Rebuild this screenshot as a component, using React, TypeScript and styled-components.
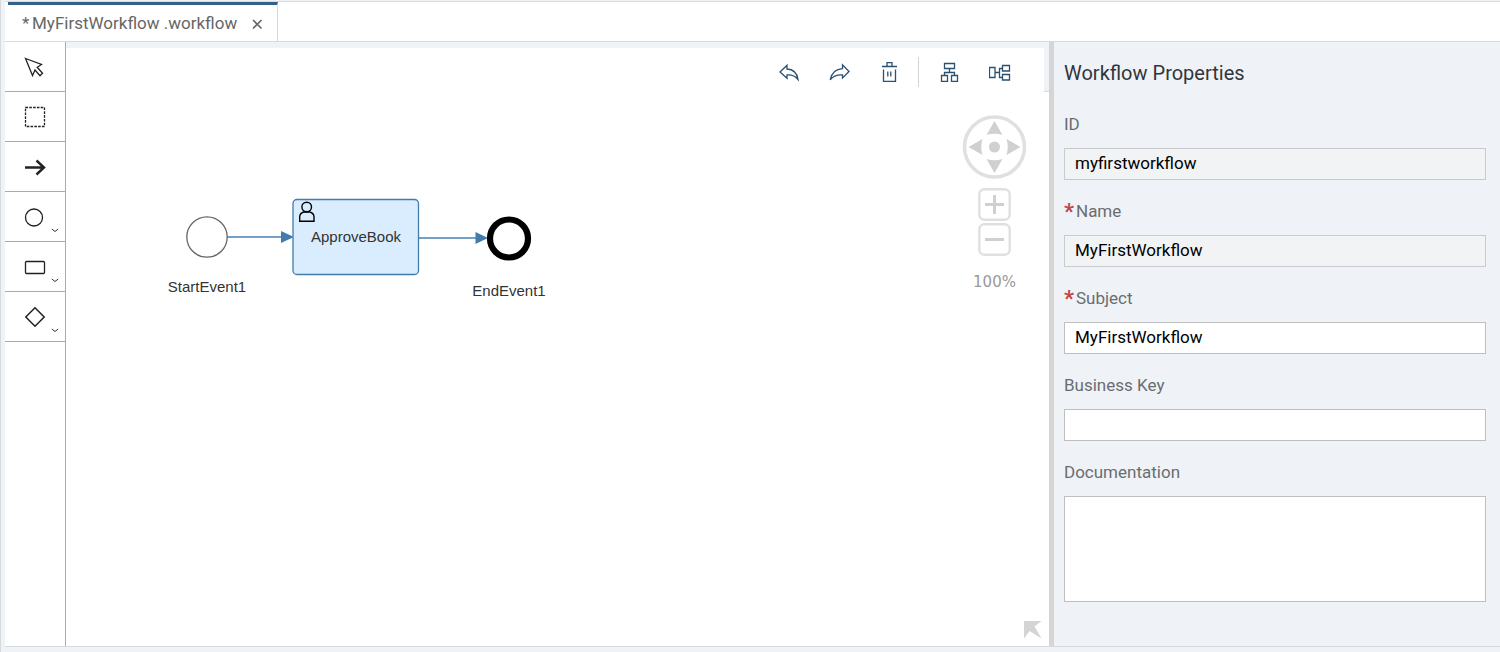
import React from 'react';
import styled, { createGlobalStyle } from 'styled-components';

const uiFont = 'Roboto, "Liberation Sans", sans-serif';
const pale = '#eff3f8';
const ink = '#32363a';
const toolInk = '#2b5070';

const GlobalStyle = createGlobalStyle`
  * { box-sizing: border-box; }
  body { margin: 0; font-family: ${uiFont}; background: ${pale}; }
  button, input, textarea { font-family: inherit; }
`;

const Page = styled.div`
  display: flex;
  flex-direction: column;
  min-height: 100vh;
  padding: 1px 0 5px 4px;
  border-left: 1px solid #d5dade;
  background: ${pale};
`;

const TabBar = styled.div`
  display: flex;
  height: 41px;
  padding-left: 3px;
  background: #fff;
  border-top: 1px solid #d9dde0;
  border-bottom: 1px solid #d5dadd;
`;

const Tab = styled.div`
  display: flex;
  align-items: center;
  width: 270px;
  padding: 0 11px 0 14px;
  border-top: 3px solid #346187;
  border-right: 1px solid #d9d9d9;
`;

const TabTitle = styled.button`
  flex: 1;
  padding: 0;
  border: 0;
  background: none;
  color: #666;
  font-size: 17px;
  line-height: 24px;
  text-align: left;
  white-space: nowrap;
`;

const DirtyMark = styled.span`
  display: inline-block;
  width: 10px;
`;

const CloseButton = styled.button`
  display: flex;
  padding: 4px 3px 2px;
  border: 0;
  background: none;
`;

const Editor = styled.main`
  display: flex;
  flex: 1;
  border-bottom: 1px solid #d5dadd;
`;

const Palette = styled.nav`
  display: flex;
  flex-direction: column;
  flex: none;
  width: 61px;
  background: #fff;
  border-right: 1px solid #aaa;
`;

const PaletteButton = styled.button`
  position: relative;
  display: flex;
  align-items: center;
  justify-content: center;
  height: 50px;
  padding: 0;
  border: 0;
  border-bottom: 1px solid #aaa;
  background: #fff;
`;

const MoreMark = styled.svg`
  position: absolute;
  right: 6px;
  bottom: 8px;
`;

const Workspace = styled.section`
  display: flex;
  flex-direction: column;
  flex: 1;
  min-width: 0;
  background: #fff;
`;

const ToolbarFrame = styled.div`
  padding: 6px 5px 0 0;
  background: ${pale};
  border-bottom: 1px solid #cfdbe5;
`;

const Toolbar = styled.div`
  display: flex;
  align-items: center;
  justify-content: flex-end;
  height: 44px;
  margin-bottom: -1px;
  padding: 4px 19px 0 0;
  background: #fff;
`;

const ToolButton = styled.button`
  display: flex;
  align-items: center;
  justify-content: center;
  width: 50px;
  height: 40px;
  padding: 0;
  border: 0;
  background: none;
`;

const Separator = styled.span`
  width: 1px;
  height: 30px;
  margin: 0 6px 0 3px;
  background: #d0d4d8;
`;

const Stage = styled.div`
  position: relative;
  flex: 1;
`;

const Diagram = styled.svg`
  position: absolute;
  inset: 0;
  width: 100%;
  height: 100%;
  font-family: "Liberation Sans", Arial, sans-serif;
  font-size: 15px;
`;

const Navigator = styled.div`
  position: absolute;
  top: 23px;
  right: 22px;
  display: flex;
  flex-direction: column;
  align-items: center;
  width: 65px;
`;

const NavButton = styled.button<{ $gap: number }>`
  display: flex;
  margin: 0 0 ${p => p.$gap}px;
  padding: 0;
  border: 0;
  background: none;
`;

const ZoomLevel = styled.output`
  color: #999;
  font-family: "DejaVu Sans", sans-serif;
  font-size: 15px;
  line-height: 20px;
`;

const OverviewButton = styled.button`
  position: absolute;
  right: 7px;
  bottom: 7px;
  display: flex;
  padding: 0;
  border: 0;
  background: none;
`;

const Splitter = styled.div`
  flex: none;
  width: 5px;
  background: #d5d5d5;
`;

const Properties = styled.form`
  flex: none;
  width: 446px;
  padding: 19px 14px 44px 10px;
  background: ${pale};
`;

const PanelTitle = styled.h2`
  margin: 0 0 8px;
  color: ${ink};
  font-size: 20px;
  font-weight: 400;
  line-height: 24px;
`;

const Field = styled.div`
  display: flex;
  flex-direction: column;
  padding-top: 19px;
`;

const Label = styled.label`
  display: flex;
  margin-bottom: 12px;
  color: #6a6d70;
  font-size: 17px;
  line-height: 24px;
`;

const Required = styled.span`
  width: 12px;
  padding-top: 2px;
  color: #c14646;
  font-size: 22px;
  font-weight: 700;
  line-height: 22px;
`;

const TextInput = styled.input`
  width: 100%;
  height: 32px;
  padding: 0 10px 2px;
  border: 1px solid #bfbfbf;
  border-radius: 0;
  background: #fff;
  color: #000;
  font-size: 17px;
  outline: none;

  &:read-only {
    background: #f2f3f4;
    border-color: #c8cacc;
  }
`;

const TextBox = styled.textarea`
  width: 100%;
  height: 106px;
  padding: 6px 10px;
  border: 1px solid #bfbfbf;
  border-radius: 0;
  background: #fff;
  font-size: 17px;
  resize: none;
  outline: none;
`;

type PaletteItem = { name: string; more?: boolean; shape: React.ReactNode };

const paletteItems: PaletteItem[] = [
  { name: 'Select', shape: <path d="M2.5 3.5 18.5 9.5 14.2 12.3 19.5 18.3 17 20.7 12 15 9.5 20.5Z" /> },
  { name: 'Lasso', shape: <rect x="2.5" y="2.5" width="19" height="19" strokeDasharray="2.6 1.2" /> },
  { name: 'Sequence flow', shape: <path d="M2 12.5H21M13.5 5.5 21 12.5 13.5 19.5" strokeWidth="2.4" /> },
  { name: 'Events', more: true, shape: <circle cx="11" cy="12.5" r="8.5" /> },
  { name: 'Tasks', more: true, shape: <rect x="2.5" y="6.5" width="19" height="12" rx="1" /> },
  { name: 'Gateways', more: true, shape: <path d="M12 2.8 21.2 12 12 21.2 2.8 12Z" strokeWidth="1.5" /> },
];

const undoShape = <path d="M1 10 8 3.2V7C14 7.2 18 11 19 17.5 16 13.8 12 12.6 8 13V16.2Z" />;
const redoShape = <path d="M20 9.5 13.5 2.8V6.6C7 7 2.5 11 1.2 17.8 4.5 13.8 9 12.6 13.5 13V16Z" />;
const deleteShape = <path d="M3 4.5H18M8 4.5V.5H13V4.5M4.5 7.5V19.5H16.5V7.5M8.8 9.5V14.5M11.8 9.5V14.5" />;
const verticalShape = (
  <path d="M5.5 1.5H15.5V6.5H5.5ZM10.5 6.5V10.5M5.5 13.5V10.5H15.5V13.5M2.5 13.5H8.5V19.5H2.5ZM12.5 13.5H18.5V19.5H12.5Z" />
);
const horizontalShape = (
  <path d="M.5 5.5H6V15.5H.5ZM6 10.5H10.5M13.5 6.5H10.5V15.5H13.5M13.5 3.5H20.5V9H13.5ZM13.5 12.5H20.5V18H13.5Z" />
);

function Tool({ name, children }: { name: string; children: React.ReactNode }) {
  return (
    <ToolButton type="button" aria-label={name}>
      <svg width="22" height="20" viewBox="0 0 22 20" fill="none" stroke={toolInk} strokeWidth="1.3">
        {children}
      </svg>
    </ToolButton>
  );
}

function ZoomButton({ name, sign, gap }: { name: string; sign: string; gap: number }) {
  return (
    <NavButton type="button" aria-label={name} $gap={gap}>
      <svg width="33" height="33" viewBox="0 0 33 33" fill="none">
        <rect x="1.3" y="1.3" width="30.4" height="30.4" rx="5" stroke="#e0e0e0" strokeWidth="2.4" />
        <path d={sign} stroke="#d0d0d0" strokeWidth="3" />
      </svg>
    </NavButton>
  );
}

function FlowDiagram() {
  return (
    <Diagram>
      <g stroke="#73a0c8" strokeWidth="2">
        <path d="M161 145H218" />
        <path d="M353 146H412" />
      </g>
      <g fill="#427cac">
        <path d="M215 139 228 145 215 151Z" />
        <path d="M409.5 140 422 146 409.5 152Z" />
      </g>
      <circle cx="141" cy="145" r="20.2" fill="#fff" stroke="#666" strokeWidth="1.3" />
      <rect x="227" y="107.5" width="125.5" height="75" rx="4" fill="#d9edff" stroke="#427cac" strokeWidth="1.3" />
      <g fill="none" stroke="#000" strokeWidth="1.4">
        <circle cx="240.7" cy="115" r="4.8" />
        <path d="M233.7 129.300V124.500Q234 121 238 120H243.500Q247.700 121 248 124.500V129.300Z" />
      </g>
      <circle cx="443" cy="146.5" r="19" fill="#fff" stroke="#000" strokeWidth="6.2" />
      <g fill="#333" textAnchor="middle">
        <text x="141" y="200">StartEvent1</text>
        <text x="290" y="150">ApproveBook</text>
        <text x="443" y="204">EndEvent1</text>
      </g>
    </Diagram>
  );
}

export default function App() {
  return (
    <>
      <GlobalStyle />
      <Page>
        <TabBar>
          <Tab>
            <TabTitle type="button">
              <DirtyMark>*</DirtyMark>MyFirstWorkflow .workflow
            </TabTitle>
            <CloseButton type="button" aria-label="Close">
              <svg width="12" height="12" viewBox="0 0 12 12" stroke="#666" strokeWidth="1.6">
                <path d="M2 2 10.5 10.5M10.5 2 2 10.5" />
              </svg>
            </CloseButton>
          </Tab>
        </TabBar>
        <Editor>
          <Palette>
            {paletteItems.map(item => (
              <PaletteButton key={item.name} type="button" aria-label={item.name}>
                <svg width="24" height="23" viewBox="0 0 24 23" fill="none" stroke="#222" strokeWidth="1.3">
                  {item.shape}
                </svg>
                {item.more && (
                  <MoreMark width="8" height="5" viewBox="0 0 8 5" fill="none" stroke="#333">
                    <path d="M.8 1 4 3.5 7.2 1" />
                  </MoreMark>
                )}
              </PaletteButton>
            ))}
          </Palette>
          <Workspace>
            <ToolbarFrame>
              <Toolbar>
                <Tool name="Undo">{undoShape}</Tool>
                <Tool name="Redo">{redoShape}</Tool>
                <Tool name="Delete">{deleteShape}</Tool>
                <Separator />
                <Tool name="Vertical layout">{verticalShape}</Tool>
                <Tool name="Horizontal layout">{horizontalShape}</Tool>
              </Toolbar>
            </ToolbarFrame>
            <Stage>
              <FlowDiagram />
              <Navigator>
                <NavButton type="button" aria-label="Pan" $gap={9}>
                  <svg width="65" height="64" viewBox="0 0 65 64" fill="#d0d0d0">
                    <circle cx="32.5" cy="32" r="30" fill="none" stroke="#e0e0e0" strokeWidth="3.6" />
                    <circle cx="32.5" cy="32" r="5.5" />
                    <path d="M32.5 6 40.500 20Q32.500 17.500 24.500 20Z" />
                    <path d="M32.500 58 40.500 44Q32.500 46.500 24.500 44Z" />
                    <path d="M6.500 32 20.500 24Q18 32 20.500 40Z" />
                    <path d="M58.500 32 44.500 24Q47 32 44.500 40Z" />
                  </svg>
                </NavButton>
                <ZoomButton name="Zoom in" sign="M7 16.5H26M16.5 7V26" gap={2} />
                <ZoomButton name="Zoom out" sign="M7 16.5H26" gap={16} />
                <ZoomLevel>100%</ZoomLevel>
              </Navigator>
              <OverviewButton type="button" aria-label="Overview">
                <svg width="18" height="18" viewBox="0 0 18 18" fill="#d4d4d4">
                  <path d="M0 0H17.5L10.5 5.5 17.5 17.5 5.5 10 0 17.5Z" />
                </svg>
              </OverviewButton>
            </Stage>
          </Workspace>
          <Splitter />
          <Properties>
            <PanelTitle>Workflow Properties</PanelTitle>
            <Field>
              <Label htmlFor="wf-id">ID</Label>
              <TextInput id="wf-id" defaultValue="myfirstworkflow" readOnly />
            </Field>
            <Field>
              <Label htmlFor="wf-name"><Required>*</Required>Name</Label>
              <TextInput id="wf-name" defaultValue="MyFirstWorkflow" readOnly />
            </Field>
            <Field>
              <Label htmlFor="wf-subject"><Required>*</Required>Subject</Label>
              <TextInput id="wf-subject" defaultValue="MyFirstWorkflow" />
            </Field>
            <Field>
              <Label htmlFor="wf-key">Business Key</Label>
              <TextInput id="wf-key" />
            </Field>
            <Field>
              <Label htmlFor="wf-doc">Documentation</Label>
              <TextBox id="wf-doc" />
            </Field>
          </Properties>
        </Editor>
      </Page>
    </>
  );
}
